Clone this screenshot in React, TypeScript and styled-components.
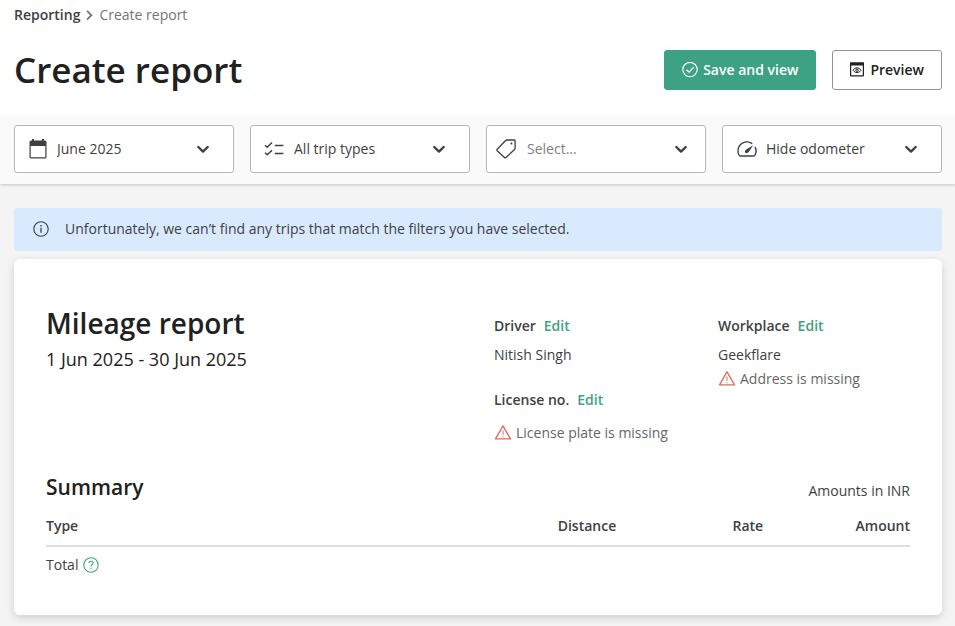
import React from "react";
import styled, { createGlobalStyle } from "styled-components";

const GlobalStyle = createGlobalStyle`
  *, *::before, *::after { box-sizing: border-box; }
  body {
    margin: 0;
    background: #f4f4f4;
    color: #3e4142;
    font-family: "Open Sans", sans-serif;
    font-size: 14px;
    line-height: 20px;
  }
  h1, h2, h3, p { margin: 0; }
`;

const Header = styled.header`
  background: #fff;
  padding: 5px 13px 20px 14px;
`;

const Breadcrumb = styled.nav`
  display: flex;
  align-items: center;
  gap: 5px;
  color: #757575;
`;

const BreadcrumbLink = styled.a`
  color: #3e4142;
  font-weight: 600;
  text-decoration: none;
`;

const TitleRow = styled.div`
  display: flex;
  align-items: center;
  justify-content: space-between;
  flex-wrap: wrap;
  gap: 16px;
  margin-top: 20px;
`;

const PageTitle = styled.h1`
  color: #212121;
  font-size: 35px;
  font-weight: 600;
  line-height: 50px;
`;

const Actions = styled.div`
  display: flex;
  gap: 16px;
`;

const Button = styled.button<{ $primary?: boolean }>`
  display: flex;
  align-items: center;
  gap: 5px;
  height: 40px;
  padding: 0 17px;
  border: 1px solid ${(p) => (p.$primary ? "#3da183" : "#949494")};
  border-radius: 3px;
  background: ${(p) => (p.$primary ? "#3da183" : "#fff")};
  color: ${(p) => (p.$primary ? "#fff" : "#212121")};
  font: 600 14px/20px "Open Sans", sans-serif;
  cursor: pointer;
`;

const Filters = styled.section`
  position: relative;
  display: grid;
  grid-template-columns: repeat(auto-fit, minmax(200px, 1fr));
  gap: 16px;
  padding: 10px 13px 11px 14px;
  background: #fafafa;
  box-shadow: 0 1px 3px rgba(0, 0, 0, 0.2);
  clip-path: inset(0 0 -6px 0);
`;

const Field = styled.label<{ $start: number; $end: number }>`
  display: grid;
  grid-template-columns: auto 1fr auto;
  align-items: center;
  height: 48px;
  border: 1px solid #b5b7b7;
  border-radius: 3px;
  background: #fff;

  > svg {
    grid-row: 1;
    z-index: 1;
    pointer-events: none;
  }
  > svg:first-child {
    grid-column: 1;
    margin-left: ${(p) => p.$start}px;
  }
  > svg:last-child {
    grid-column: 3;
    margin-right: ${(p) => p.$end}px;
  }
`;

const Select = styled.select<{ $indent: number; $muted?: boolean }>`
  grid-row: 1;
  grid-column: 1 / -1;
  width: 100%;
  height: 100%;
  padding: 0 48px 0 ${(p) => p.$indent}px;
  appearance: none;
  border: 0;
  border-radius: 3px;
  background: transparent;
  color: ${(p) => (p.$muted ? "#7c7f80" : "#3e4142")};
  font: 400 14px/20px "Open Sans", sans-serif;
`;

const Main = styled.main`
  padding: 24px 13px 11px 14px;
`;

const Notice = styled.p`
  display: flex;
  align-items: center;
  gap: 16px;
  min-height: 43px;
  padding: 0 19px 1px;
  border-radius: 3px;
  background: #d9eaff;
`;

const Card = styled.article`
  margin-top: 8px;
  padding: 48px 32px 33px;
  border-radius: 6px;
  background: #fff;
  box-shadow: 0 3px 8px rgba(0, 0, 0, 0.15);
`;

const Details = styled.div`
  display: grid;
  grid-template-columns: repeat(4, 1fr);
  column-gap: 32px;
`;

const Heading = styled.div`
  grid-column: span 2;
  color: #212121;
`;

const ReportTitle = styled.h2`
  font-size: 28px;
  font-weight: 600;
  line-height: 32px;
`;

const Period = styled.p`
  margin-top: 8px;
  font-size: 18px;
  font-weight: 500;
  line-height: 24px;
`;

const Facts = styled.div`
  display: flex;
  flex-direction: column;
  gap: 25px;
  padding-top: 9px;
`;

const FactLabel = styled.h3`
  display: flex;
  gap: 8px;
  margin-bottom: 9px;
  font-size: 14px;
  font-weight: 600;
  line-height: 20px;
`;

const EditLink = styled.button`
  padding: 0;
  border: 0;
  background: none;
  color: #3da183;
  font: inherit;
  cursor: pointer;
`;

const Missing = styled.p`
  display: flex;
  align-items: center;
  gap: 4px;
  min-height: 28px;
  color: #646767;
  white-space: nowrap;
`;

const SummaryHead = styled.div`
  display: flex;
  align-items: center;
  justify-content: space-between;
  margin-top: 24px;
`;

const SummaryTitle = styled.h2`
  color: #212121;
  font-size: 21px;
  font-weight: 600;
  line-height: 32px;
`;

const Currency = styled.p`
  padding-top: 8px;
`;

const Table = styled.table`
  width: 100%;
  margin-top: 7px;
  border-collapse: collapse;
  table-layout: fixed;
`;

const HeadCell = styled.th<{ $right?: boolean }>`
  width: ${(p) => (p.$right ? "17%" : "auto")};
  height: 36px;
  padding: 0 0 3px;
  border-bottom: 2px solid #dcdfdd;
  font-weight: 600;
  text-align: ${(p) => (p.$right ? "right" : "left")};
`;

const TotalCell = styled.td`
  height: 36px;
  padding: 0;
`;

const Total = styled.span`
  display: flex;
  align-items: center;
  gap: 5px;
`;

const HelpButton = styled.button`
  display: flex;
  padding: 0;
  border: 0;
  background: none;
  color: #3da183;
  cursor: pointer;
`;

const svgProps = { fill: "none", stroke: "currentColor", "aria-hidden": true } as const;

const Chevron = () => (
  <svg {...svgProps} width="14" height="14" viewBox="0 0 14 14" strokeWidth="2.4" strokeLinecap="round" strokeLinejoin="round">
    <path d="M2.3 5 7 9.6 11.7 5" />
  </svg>
);

const Separator = () => (
  <svg {...svgProps} width="9" height="12" viewBox="0 0 9 12" strokeWidth="1.8">
    <path d="M2 1.8 6.4 6.2 2 10.6" />
  </svg>
);

const CheckCircle = () => (
  <svg {...svgProps} width="16" height="16" viewBox="0 0 16 16" strokeWidth="1.1">
    <circle cx="8" cy="7.6" r="7.2" />
    <path d="m4.5 7.8 2.5 2.3 4.7-4.8" strokeWidth="1.3" />
  </svg>
);

const PreviewIcon = () => (
  <svg {...svgProps} width="15" height="16" viewBox="1 0 15 16" strokeWidth="1.2">
    <rect x="1.6" y="1.1" width="12.8" height="12.8" rx=".4" />
    <path d="M1 .5h14v3H1z" fill="currentColor" stroke="none" />
    <path d="M4 8.2C5.1 6.6 6.4 5.9 8 5.9s2.9.7 4 2.3c-1.1 1.6-2.4 2.3-4 2.3s-2.9-.7-4-2.3Z" strokeWidth="1" />
    <circle cx="8" cy="8.2" r="1.2" strokeWidth="1" />
  </svg>
);

const CalendarIcon = () => (
  <svg {...svgProps} width="18" height="20" viewBox="0 0 18 20" strokeWidth="1.2">
    <rect x="1.1" y="2.1" width="15.8" height="16.8" rx="1" />
    <path d="M1 2h16v5H1zM3 0h2v3H3zM13 0h2v3h-2z" fill="currentColor" stroke="none" />
  </svg>
);

const ChecklistIcon = () => (
  <svg {...svgProps} width="20" height="16" viewBox="0 0 20 16" strokeWidth="1.5">
    <path d="m1 4.2 2.2 2L8 1.5M1 11.8l2.2 2L8 9.2M10.8 4.6h8.6M10.8 12.4h8.6" />
  </svg>
);

const TagIcon = () => (
  <svg {...svgProps} width="20" height="20" viewBox="0 0 20 20" strokeWidth="1.3" strokeLinejoin="round">
    <path d="M11 1h7.2q.9 0 .9.9V9c0 .8-.2 1.2-.8 1.8L10 18.5c-.5.5-1 .5-1.5 0L1.2 11.7c-.5-.5-.5-1 0-1.5L9.4 1.7C10 1.1 10.3 1 11 1Z" />
    <rect x="14.5" y="3.6" width="1.8" height="1.8" fill="currentColor" stroke="none" />
  </svg>
);

const GaugeIcon = () => (
  <svg {...svgProps} width="20" height="16" viewBox="0 0 20 16" strokeWidth="1.4">
    <path d="M15.3 2.7A9 9 0 0 0 1 10c0 1.7.3 2.8 1 4 .4.9.8 1 1.5 1h13c.8 0 1.2-.2 1.6-1 1.3-2.7 1.2-5.8-.2-8.2" />
    <path d="M16.2 4.2 10 8c-1.6.9-2.6 2.2-1.8 3.4.9 1.3 2.7 1 3.7-.6Z" fill="currentColor" stroke="none" />
  </svg>
);

const InfoIcon = () => (
  <svg {...svgProps} width="16" height="16" viewBox="0 0 16 16" strokeWidth="1.1">
    <circle cx="8" cy="8" r="7.2" />
    <path d="M8 6.8v5M8 4v1.4" strokeWidth="1.3" />
  </svg>
);

const HelpIcon = () => (
  <svg {...svgProps} width="16" height="16" viewBox="0 0 16 16" strokeWidth="1.1">
    <circle cx="8" cy="8" r="7.2" />
    <path d="M6 6.1C6 4.9 6.8 4.3 8 4.3s2.1.7 2.1 1.8C10.1 7.5 8 7.7 8 9.4M8 10.7V12" />
  </svg>
);

const WarningIcon = () => (
  <svg {...svgProps} width="18" height="16" viewBox="0 0 18 16" stroke="#e06a5f" strokeWidth="1.3" strokeLinejoin="round">
    <path d="M9 .9 16.5 13.9h-15Z" />
    <path d="M9 5.5V10M9 11.1v1.2" strokeWidth="1" />
  </svg>
);

const filters = [
  { label: "Period", value: "June 2025", icon: <CalendarIcon />, start: 14, indent: 42, end: 23 },
  { label: "Trip types", value: "All trip types", icon: <ChecklistIcon />, start: 13, indent: 43, end: 23 },
  { label: "Tags", value: "Select...", icon: <TagIcon />, start: 9, indent: 40, end: 17, muted: true },
  { label: "Odometer", value: "Hide odometer", icon: <GaugeIcon />, start: 14, indent: 43, end: 23 },
];

export default function App() {
  return (
    <>
      <GlobalStyle />
      <Header>
        <Breadcrumb aria-label="Breadcrumb">
          <BreadcrumbLink href="#reporting">Reporting</BreadcrumbLink>
          <Separator />
          <span>Create report</span>
        </Breadcrumb>
        <TitleRow>
          <PageTitle>Create report</PageTitle>
          <Actions>
            <Button type="button" $primary>
              <CheckCircle />
              Save and view
            </Button>
            <Button type="button">
              <PreviewIcon />
              Preview
            </Button>
          </Actions>
        </TitleRow>
      </Header>
      <Filters aria-label="Filters">
        {filters.map((f) => (
          <Field key={f.label} $start={f.start} $end={f.end}>
            {f.icon}
            <Select aria-label={f.label} $indent={f.indent} $muted={f.muted}>
              <option>{f.value}</option>
            </Select>
            <Chevron />
          </Field>
        ))}
      </Filters>
      <Main>
        <Notice role="status">
          <InfoIcon />
          Unfortunately, we can’t find any trips that match the filters you have selected.
        </Notice>
        <Card>
          <Details>
            <Heading>
              <ReportTitle>Mileage report</ReportTitle>
              <Period>1 Jun 2025 - 30 Jun 2025</Period>
            </Heading>
            <Facts>
              <div>
                <FactLabel>
                  Driver <EditLink type="button" aria-label="Edit driver">Edit</EditLink>
                </FactLabel>
                <p>Nitish Singh</p>
              </div>
              <div>
                <FactLabel>
                  License no. <EditLink type="button" aria-label="Edit license number">Edit</EditLink>
                </FactLabel>
                <Missing>
                  <WarningIcon />
                  License plate is missing
                </Missing>
              </div>
            </Facts>
            <Facts>
              <div>
                <FactLabel>
                  Workplace <EditLink type="button" aria-label="Edit workplace">Edit</EditLink>
                </FactLabel>
                <p>Geekflare</p>
                <Missing>
                  <WarningIcon />
                  Address is missing
                </Missing>
              </div>
            </Facts>
          </Details>
          <SummaryHead>
            <SummaryTitle>Summary</SummaryTitle>
            <Currency>Amounts in INR</Currency>
          </SummaryHead>
          <Table>
            <thead>
              <tr>
                <HeadCell scope="col">Type</HeadCell>
                <HeadCell scope="col" $right>Distance</HeadCell>
                <HeadCell scope="col" $right>Rate</HeadCell>
                <HeadCell scope="col" $right>Amount</HeadCell>
              </tr>
            </thead>
            <tbody>
              <tr>
                <TotalCell colSpan={4}>
                  <Total>
                    Total
                    <HelpButton type="button" aria-label="About the total">
                      <HelpIcon />
                    </HelpButton>
                  </Total>
                </TotalCell>
              </tr>
            </tbody>
          </Table>
        </Card>
      </Main>
    </>
  );
}
